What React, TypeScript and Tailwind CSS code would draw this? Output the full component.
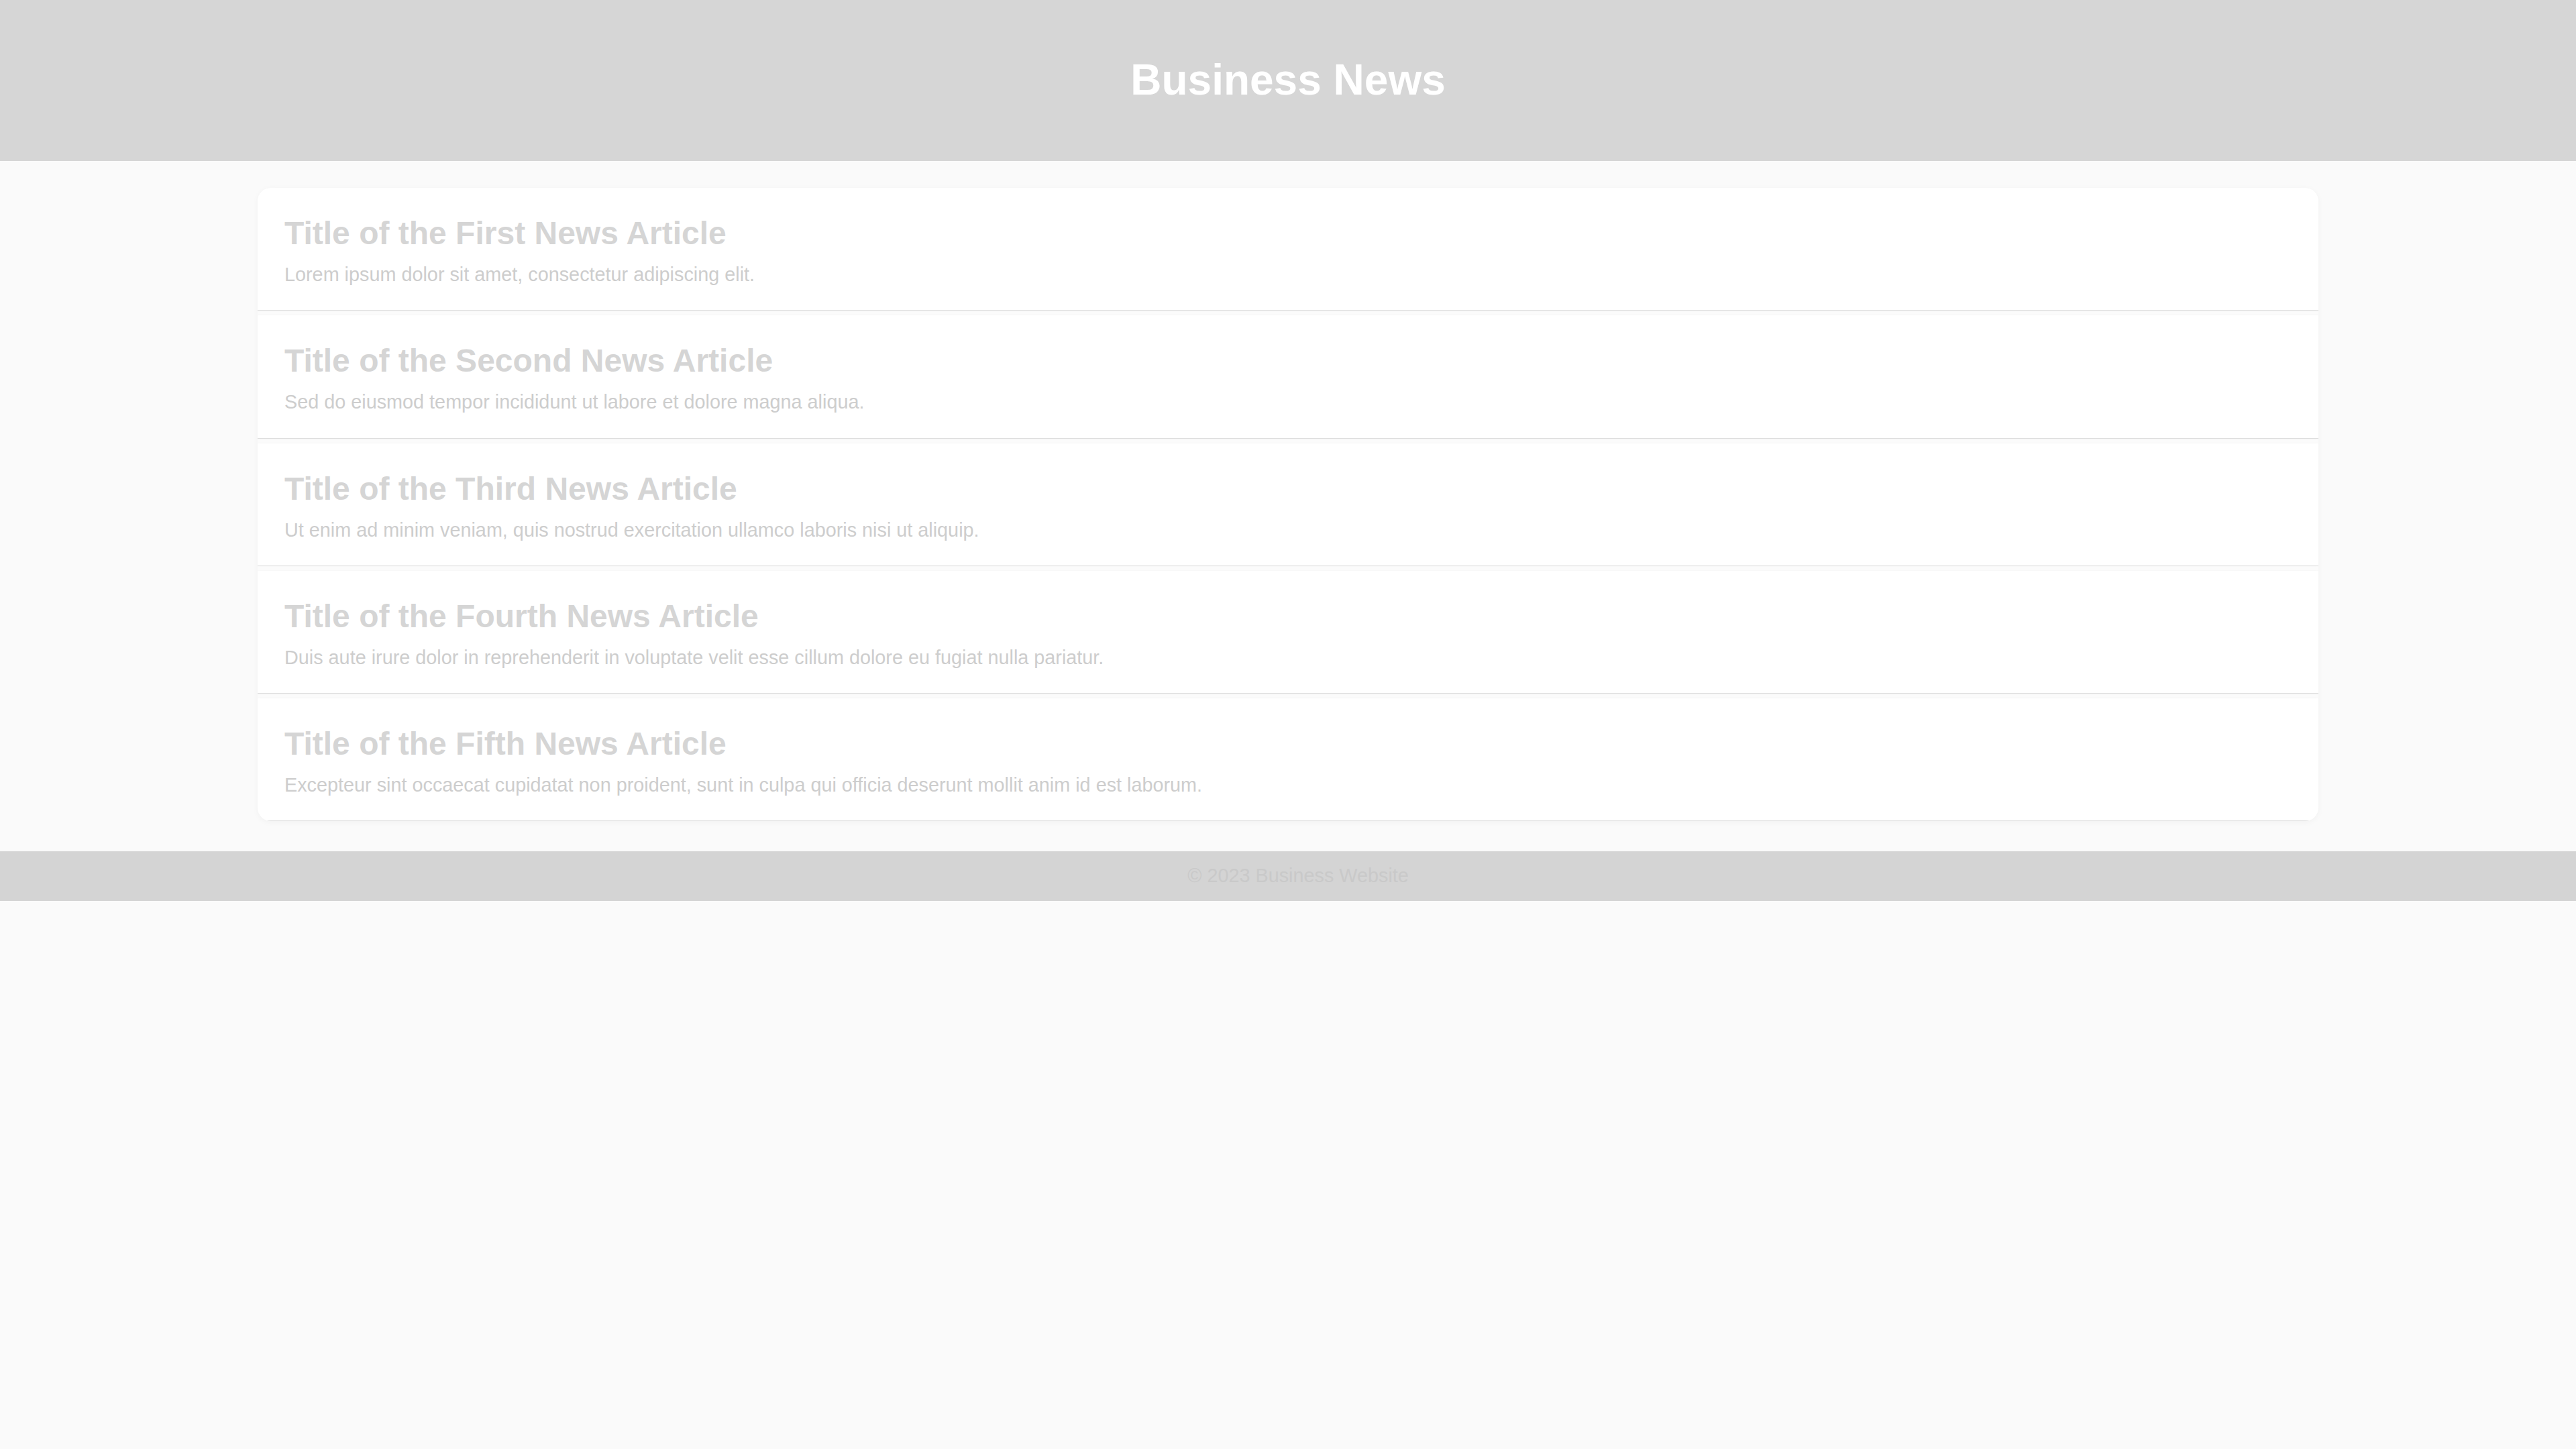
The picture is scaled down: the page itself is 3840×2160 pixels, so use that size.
const articles = [
  {
    title: "Title of the First News Article",
    body: "Lorem ipsum dolor sit amet, consectetur adipiscing elit.",
  },
  {
    title: "Title of the Second News Article",
    body: "Sed do eiusmod tempor incididunt ut labore et dolore magna aliqua.",
  },
  {
    title: "Title of the Third News Article",
    body: "Ut enim ad minim veniam, quis nostrud exercitation ullamco laboris nisi ut aliquip.",
  },
  {
    title: "Title of the Fourth News Article",
    body: "Duis aute irure dolor in reprehenderit in voluptate velit esse cillum dolore eu fugiat nulla pariatur.",
  },
  {
    title: "Title of the Fifth News Article",
    body: "Excepteur sint occaecat cupidatat non proident, sunt in culpa qui officia deserunt mollit anim id est laborum.",
  },
];

export default function App() {
  return (
    <div className="min-h-screen bg-[#fafafa] font-['Liberation_Sans',Arial,sans-serif]">
      <header className="h-[240px] bg-[#d6d6d6] flex items-center justify-center">
        <h1 className="text-[64px] font-bold text-white leading-[1.15]">Business News</h1>
      </header>

      <main className="w-4/5 mx-auto mt-[40px] rounded-[20px] overflow-hidden bg-[#fbfbfb] shadow-[0_2px_10px_rgba(0,0,0,0.04)]">
        {articles.map((a) => (
          <article
            key={a.title}
            className="bg-white px-[40px] pt-[40px] pb-[36px] border-b border-[#dddddd] mb-[7px] last:mb-0 shadow-[0_0_3px_rgba(0,0,0,0.03)]"
          >
            <h2 className="text-[48px] font-bold text-[#d5d5d5] leading-[1.15] mb-[18px]">{a.title}</h2>
            <p className="text-[28.8px] text-[#cdcdcd] leading-[1.15]">{a.body}</p>
          </article>
        ))}
      </main>

      <footer className="mt-[45px] bg-[#d4d4d4] py-[20px] pl-[30px] text-center">
        <p className="text-[28.8px] text-[#c9c9c9] leading-[1.15]">© 2023 Business Website</p>
      </footer>
    </div>
  );
}
